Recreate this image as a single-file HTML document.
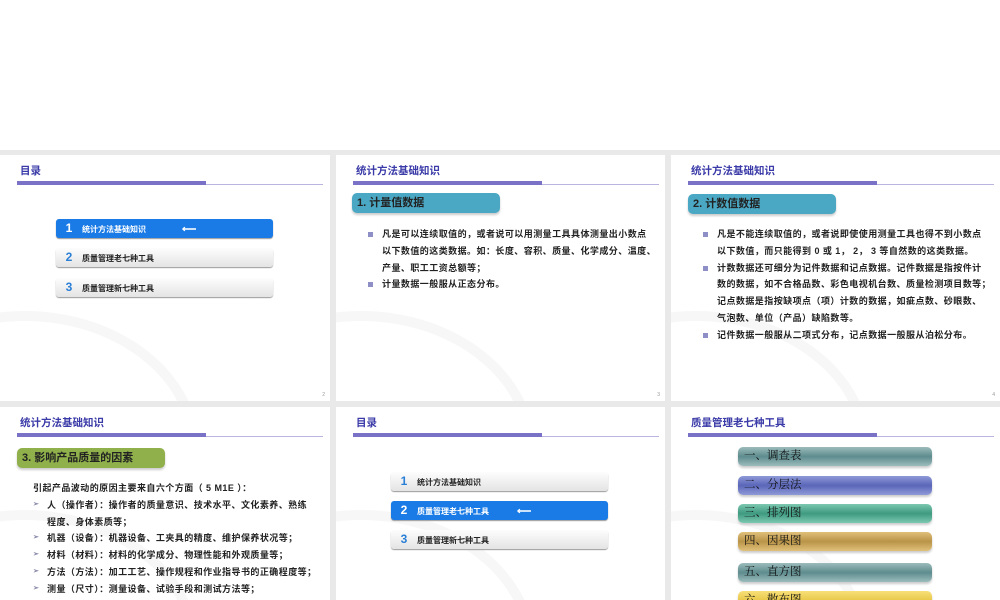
<!DOCTYPE html><html><head><meta charset="utf-8"><style>
*{margin:0;padding:0;box-sizing:border-box}
body{width:1000px;height:600px;background:#fff;position:relative;overflow:hidden;font-family:"Liberation Sans","Noto Sans CJK SC",sans-serif}
.bg{position:absolute;left:0;top:150px;width:1000px;height:450px;background:#e9e9e9}
.s{position:absolute;background:#fff;overflow:hidden}
.s:before{content:"";position:absolute;left:-150px;bottom:-190px;width:330px;height:260px;border:10px solid #f7f7f7;border-radius:50%}
.t{position:absolute;left:20px;top:8px;font-size:10.5px;font-weight:bold;color:#3a3aa8}
.bar{position:absolute;left:17px;top:26px;width:189px;height:4px;background:#7a72c6}
.ln{position:absolute;left:206px;top:29px;width:117px;height:1px;background:#b9b4e0}
.pg{position:absolute;right:5px;bottom:3px;font-size:5px;color:#999}
.btn{position:absolute;height:19px;border-radius:3px;background:linear-gradient(#fdfdfd,#e4e4e4);box-shadow:0 1px 1px #999;font-size:8px;font-weight:bold;color:#222;line-height:19px}
.btn b{display:inline-block;width:26px;text-align:center;font-size:12px;color:#2a7fd6}
.btn.on{background:#1a7be6;color:#fff}.btn.on b{color:#fff}
.hd{position:absolute;height:20px;border-radius:5px;color:#222;font-size:11px;font-weight:bold;line-height:20px;padding-left:5px;box-shadow:0 2px 2px #ccc}
.tx{position:absolute;font-size:9px;letter-spacing:0.45px;font-weight:bold;color:#222;line-height:16.8px}
.tx p{position:relative;padding-left:14px}
.tx p.b:before{content:"";position:absolute;left:0;top:6px;width:5px;height:5px;background:#8f8fc8}
.tx p.a:before{content:"➢";position:absolute;left:0;top:0;color:#88a;font-size:7px}
.pb{position:absolute;left:67px;width:194px;height:19px;border-radius:5px;font-size:11.5px;line-height:19px;padding-left:6px;color:#111;font-family:"Liberation Serif","Noto Serif CJK SC",serif;box-shadow:0 2px 2px #ccc}
</style></head><body>
<div class="bg"></div>

<div class="s" style="left:0;top:155px;width:330px;height:246px">
<div class="t">目录</div><div class="bar"></div><div class="ln"></div>
<div class="btn on" style="left:56px;top:64px;width:217px"><b>1</b>统计方法基础知识<span style="margin-left:36px;font-size:10px">⟵</span></div>
<div class="btn" style="left:56px;top:93px;width:217px"><b>2</b>质量管理老七种工具</div>
<div class="btn" style="left:56px;top:123px;width:217px"><b>3</b>质量管理新七种工具</div>
<div class="pg">2</div></div>

<div class="s" style="left:336px;top:155px;width:329px;height:246px">
<div class="t">统计方法基础知识</div><div class="bar"></div><div class="ln"></div>
<div class="hd" style="left:16px;top:38px;width:148px;background:#4aa8c4">1. 计量值数据</div>
<div class="tx" style="left:32px;top:71px;width:292px">
<p class="b">凡是可以连续取值的，或者说可以用测量工具具体测量出小数点<br>以下数值的这类数据。如：长度、容积、质量、化学成分、温度、<br>产量、职工工资总额等；</p>
<p class="b">计量数据一般服从正态分布。</p></div>
<div class="pg">3</div></div>

<div class="s" style="left:671px;top:155px;width:329px;height:246px">
<div class="t">统计方法基础知识</div><div class="bar"></div><div class="ln"></div>
<div class="hd" style="left:17px;top:39px;width:148px;background:#4aa8c4">2. 计数值数据</div>
<div class="tx" style="left:32px;top:71px;width:296px">
<p class="b">凡是不能连续取值的，或者说即使使用测量工具也得不到小数点<br>以下数值，而只能得到 0 或 1， 2， 3 等自然数的这类数据。</p>
<p class="b">计数数据还可细分为记件数据和记点数据。记件数据是指按件计<br>数的数据，如不合格品数、彩色电视机台数、质量检测项目数等；<br>记点数据是指按缺项点（项）计数的数据，如疵点数、砂眼数、<br>气泡数、单位（产品）缺陷数等。</p>
<p class="b">记件数据一般服从二项式分布，记点数据一般服从泊松分布。</p></div>
<div class="pg">4</div></div>

<div class="s" style="left:0;top:407px;width:330px;height:193px">
<div class="t">统计方法基础知识</div><div class="bar"></div><div class="ln"></div>
<div class="hd" style="left:17px;top:41px;width:148px;background:#8fb04a">3. 影响产品质量的因素</div>
<div class="tx" style="left:33px;top:73px;width:296px">
<p style="padding-left:0">引起产品波动的原因主要来自六个方面（ 5 M1E ）：</p>
<p class="a">人（操作者）：操作者的质量意识、技术水平、文化素养、熟练<br>程度、身体素质等；</p>
<p class="a">机器（设备）：机器设备、工夹具的精度、维护保养状况等；</p>
<p class="a">材料（材料）：材料的化学成分、物理性能和外观质量等；</p>
<p class="a">方法（方法）：加工工艺、操作规程和作业指导书的正确程度等；</p>
<p class="a">测量（尺寸）：测量设备、试验手段和测试方法等；</p>
<p class="a">环境（环境）：工作场地的温度、湿度、含尘度、照明、噪声等。</p></div></div>

<div class="s" style="left:336px;top:407px;width:329px;height:193px">
<div class="t">目录</div><div class="bar"></div><div class="ln"></div>
<div class="btn" style="left:55px;top:65px;width:217px"><b>1</b>统计方法基础知识</div>
<div class="btn on" style="left:55px;top:94px;width:217px"><b>2</b>质量管理老七种工具<span style="margin-left:28px;font-size:10px">⟵</span></div>
<div class="btn" style="left:55px;top:123px;width:217px"><b>3</b>质量管理新七种工具</div></div>

<div class="s" style="left:671px;top:407px;width:329px;height:193px">
<div class="t">质量管理老七种工具</div><div class="bar"></div><div class="ln"></div>
<div class="pb" style="top:40px;background:linear-gradient(#9cbcbc,#5e8c8e 50%,#9cbcbc)">一、调查表</div>
<div class="pb" style="top:69px;background:linear-gradient(#8f9ad8,#5a66b8 50%,#8f9ad8)">二、分层法</div>
<div class="pb" style="top:97px;background:linear-gradient(#7cc8b0,#3e9a80 50%,#7cc8b0)">三、排列图</div>
<div class="pb" style="top:125px;background:linear-gradient(#e0c07a,#b99448 50%,#e0c07a)">四、因果图</div>
<div class="pb" style="top:156px;background:linear-gradient(#9cbcbc,#5e8c8e 50%,#9cbcbc)">五、直方图</div>
<div class="pb" style="top:184px;background:linear-gradient(#f8e07a,#e8c84a 50%,#f8e07a)">六、散布图</div></div>
</body></html>
